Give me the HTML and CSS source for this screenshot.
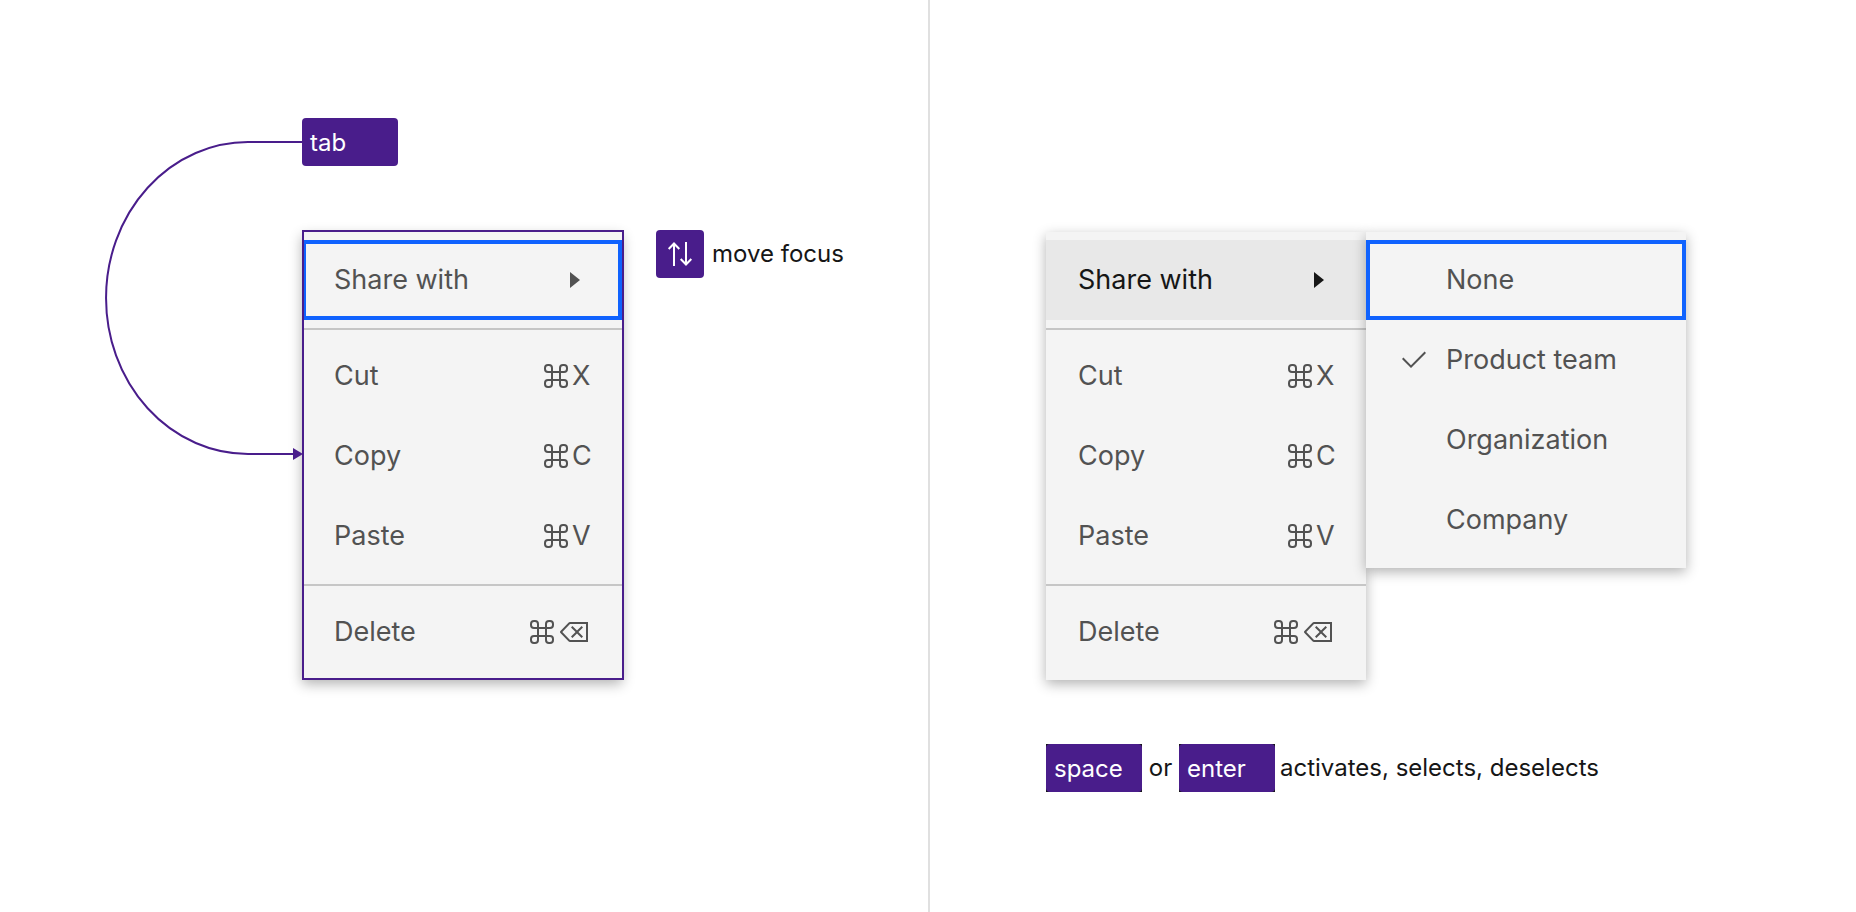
FILE: index.html
```html
<!DOCTYPE html>
<html lang="en">
<head>
<meta charset="utf-8">
<meta name="viewport" content="width=device-width, initial-scale=1">
<title>Menu keyboard interaction</title>
<link rel="stylesheet" href="styles.css">
</head>
<body>
<svg class="sprite" aria-hidden="true">
  <symbol id="caret" viewBox="0 0 32 32"><path d="M12 8 22 16 12 24z"/></symbol>
  <symbol id="check" viewBox="0 0 32 32"><path d="M13 24 4 15 5.414 13.586 13 21.171 26.586 7.586 28 9z"/></symbol>
  <symbol id="command" viewBox="0 0 32 32"><path d="M24 13a4 4 0 0 0 4-4V8a4 4 0 0 0-4-4h-1a4 4 0 0 0-4 4v3h-6V8a4 4 0 0 0-4-4H8a4 4 0 0 0-4 4v1a4 4 0 0 0 4 4h3v6H8a4 4 0 0 0-4 4v1a4 4 0 0 0 4 4h1a4 4 0 0 0 4-4v-3h6v3a4 4 0 0 0 4 4h1a4 4 0 0 0 4-4v-1a4 4 0 0 0-4-4h-3v-6zM21 8a2 2 0 0 1 2-2h1a2 2 0 0 1 2 2v1a2 2 0 0 1-2 2h-3zM8 11a2 2 0 0 1-2-2V8a2 2 0 0 1 2-2h1a2 2 0 0 1 2 2v3zm3 13a2 2 0 0 1-2 2H8a2 2 0 0 1-2-2v-1a2 2 0 0 1 2-2h3zm8-5h-6v-6h6zm2 2h3a2 2 0 0 1 2 2v1a2 2 0 0 1-2 2h-1a2 2 0 0 1-2-2z"/></symbol>
  <symbol id="erase" viewBox="0 0 32 32"><path d="M30 26H11.977a2.003 2.003 0 0 1-1.537-.718L2.231 16.64a1 1 0 0 1 0-1.28l8.209-8.642A2 2 0 0 1 11.977 6H30zM4.32 16l7.657 8H28V8H11.977z"/><path d="M20.414 16 25 11.414 23.586 10 19 14.586 14.414 10 13 11.414 17.586 16 13 20.586 14.414 22 19 17.414 23.586 22 25 20.586z"/></symbol>
</svg>

<main class="board">
  <section class="panel">
    <span class="key">tab</span>
    <div class="stage">
      <ul class="menu outlined" aria-label="Actions">
        <li><button class="item focused" type="button">Share with <svg class="icon"><use href="#caret"/></svg></button></li>
        <li class="rule" role="separator"></li>
        <li><button class="item" type="button">Cut <span class="shortcut"><svg class="icon"><use href="#command"/></svg><kbd>X</kbd></span></button></li>
        <li><button class="item" type="button">Copy <span class="shortcut"><svg class="icon"><use href="#command"/></svg><kbd>C</kbd></span></button></li>
        <li><button class="item" type="button">Paste <span class="shortcut"><svg class="icon"><use href="#command"/></svg><kbd>V</kbd></span></button></li>
        <li class="rule" role="separator"></li>
        <li><button class="item" type="button">Delete <span class="shortcut"><svg class="icon"><use href="#command"/></svg><svg class="icon"><use href="#erase"/></svg></span></button></li>
      </ul>
      <p class="legend">
        <svg class="arrows" viewBox="0 0 48 48" role="img" aria-label="Up and down arrow keys"><path d="M18 36V14M12.7 19 18 13.5 23.3 19M30 12V34M24.7 29 30 34.5 35.3 29"/></svg>
        <span>move focus</span>
      </p>
    </div>
    <svg class="connector" viewBox="0 0 198 324" aria-hidden="true">
      <path class="line" d="M198 6H144A142 156 0 0 0 144 318H190"/>
      <path class="head" d="M189 312 199 318 189 324z"/>
    </svg>
  </section>

  <section class="panel second">
    <div class="stage">
      <ul class="menu" aria-label="Actions">
        <li><button class="item open" type="button" aria-expanded="true">Share with <svg class="icon"><use href="#caret"/></svg></button></li>
        <li class="rule" role="separator"></li>
        <li><button class="item" type="button">Cut <span class="shortcut"><svg class="icon"><use href="#command"/></svg><kbd>X</kbd></span></button></li>
        <li><button class="item" type="button">Copy <span class="shortcut"><svg class="icon"><use href="#command"/></svg><kbd>C</kbd></span></button></li>
        <li><button class="item" type="button">Paste <span class="shortcut"><svg class="icon"><use href="#command"/></svg><kbd>V</kbd></span></button></li>
        <li class="rule" role="separator"></li>
        <li><button class="item" type="button">Delete <span class="shortcut"><svg class="icon"><use href="#command"/></svg><svg class="icon"><use href="#erase"/></svg></span></button></li>
      </ul>
      <ul class="menu" aria-label="Share with">
        <li><button class="item choice focused" type="button"><span class="icon"></span>None</button></li>
        <li><button class="item choice" type="button" aria-pressed="true"><svg class="icon"><use href="#check"/></svg>Product team</button></li>
        <li><button class="item choice" type="button"><span class="icon"></span>Organization</button></li>
        <li><button class="item choice" type="button"><span class="icon"></span>Company</button></li>
      </ul>
    </div>
    <p class="hint">
      <span class="corner"><span class="key">space</span></span>
      <span class="word">or</span>
      <span class="corner"><span class="key">enter</span></span>
      <span>activates, selects, deselects</span>
    </p>
  </section>
</main>
</body>
</html>
```

FILE: styles.css
```css
* {
  box-sizing: border-box;
}

body {
  margin: 0;
  background: #fff;
  color: #161616;
  font: 24px/32px Inter, "Liberation Sans", sans-serif;
}

ul,
p {
  margin: 0;
  padding: 0;
  list-style: none;
}

.sprite {
  display: none;
}

.board {
  display: grid;
  grid-template-columns: 1fr 1fr;
  min-height: 100vh;
}

.panel {
  position: relative;
  display: flex;
  flex-direction: column;
  align-items: flex-start;
  gap: 66px;
  padding: 118px 0 64px 302px;
}

.second {
  gap: 64px;
  padding: 232px 0 64px 116px;
  border-left: 2px solid #e0e0e0;
}

.stage {
  display: flex;
  align-items: flex-start;
}

.menu {
  position: relative;
  width: 320px;
  padding: 8px 0;
  background: #f4f4f4;
  box-shadow: 0 4px 12px rgba(0, 0, 0, 0.3);
}

/* Tab stop outline drawn over the whole menu */
.outlined::after {
  content: "";
  position: absolute;
  inset: -2px -2px 0 0;
  border: 2px solid #491d8b;
  pointer-events: none;
}

.item {
  display: flex;
  align-items: center;
  justify-content: space-between;
  width: 100%;
  height: 80px;
  padding: 0 32px;
  border: 0;
  background: none;
  color: #525252;
  font: inherit;
  font-size: 27px;
  text-align: left;
}

.choice {
  justify-content: flex-start;
  gap: 16px;
}

.focused {
  box-shadow: inset 0 0 0 4px #0f62fe;
}

.open {
  background: #e8e8e8;
  color: #161616;
}

.rule {
  height: 2px;
  margin: 8px 0 6px;
  background: #c6c6c6;
}

.icon {
  flex: none;
  width: 32px;
  height: 32px;
  fill: currentColor;
}

.shortcut {
  display: flex;
  align-items: center;
}

kbd {
  width: 18px;
  font: inherit;
  text-align: center;
}

.key {
  display: block;
  width: 96px;
  height: 48px;
  padding: 9px 8px 7px;
  border-radius: 4px;
  background: #491d8b;
  color: #fff;
}

.corner {
  background: #161616;
}

.legend {
  display: flex;
  align-items: center;
  gap: 8px;
  margin: -2px 0 0 34px;
}

.arrows {
  width: 48px;
  height: 48px;
  border-radius: 4px;
  background: #491d8b;
  fill: none;
  stroke: #fff;
  stroke-width: 2;
}

.hint {
  display: flex;
  align-items: center;
  gap: 5px;
}

.word {
  width: 27px;
  text-align: center;
}

.connector {
  position: absolute;
  top: 136px;
  left: 104px;
  width: 198px;
  height: 324px;
  overflow: visible;
}

.line {
  fill: none;
  stroke: #491d8b;
  stroke-width: 2;
}

.head {
  fill: #491d8b;
}
```
